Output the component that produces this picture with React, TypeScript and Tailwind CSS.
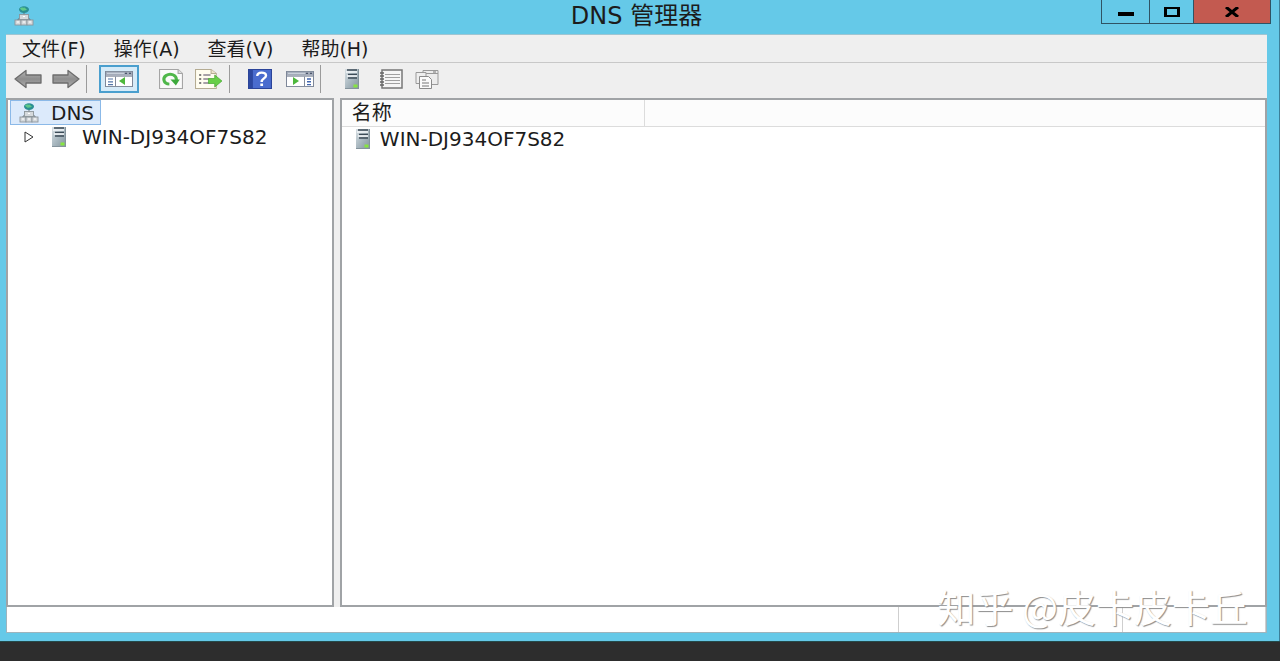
import type { ReactNode } from "react";

function DnsIcon({ className }: { className?: string }) {
  return (
    <svg viewBox="0 0 20 20" className={className} aria-hidden="true">
      <path d="M10 5v6M4 14v-1h12v1" stroke="#6b747b" fill="none" />
      <ellipse cx="10" cy="3.6" rx="5" ry="3.4" fill="#2b8f93" />
      <path d="M6 2.5c2-2 3 0 4-1 2 0 1 2 3 1.500-1 2-3 1-4 2-1-1-2-1-3-2.500z" fill="#5fc98a" />
      <g fill="#d5d9dc" stroke="#8d959b" strokeWidth="0.900">
        <rect x="5.500" y="8.500" width="9" height="5" />
        <rect x="1" y="14" width="6" height="5" />
        <rect x="7" y="14" width="6" height="5" />
        <rect x="13" y="14" width="6" height="5" />
      </g>
      <path d="M9 10.500h2M3 16h2M9 16h2M15 16h2" stroke="#fff" />
    </svg>
  );
}

function ServerIcon({ className }: { className?: string }) {
  return (
    <svg viewBox="0 0 14 20" preserveAspectRatio="none" className={className} aria-hidden="true">
      <defs>
        <linearGradient id="server" x1="0" y1="0" x2="1" y2="1">
          <stop offset="0" stopColor="#d9e0e4" />
          <stop offset="0.500" stopColor="#a9b8c0" />
          <stop offset="1" stopColor="#82929b" />
        </linearGradient>
      </defs>
      <rect width="14" height="20" fill="url(#server)" />
      <path d="M0 19.500h14M13.500 0v20" stroke="#84939c" fill="none" />
      <path d="M2 1h10M3 5.500h9M3 9h9" stroke="#3c4b57" strokeWidth="1.300" />
      <path d="M1 3h11M2 7h10" stroke="#f5f8fa" strokeWidth="1.500" />
      <rect x="8.500" y="15.500" width="4" height="3" fill="#86e63f" />
    </svg>
  );
}

function ArrowIcon({ flip = false }: { flip?: boolean }) {
  return (
    <svg viewBox="0 0 28 20" className={flip ? "h-5 w-7 -scale-x-100" : "h-5 w-7"} aria-hidden="true">
      <defs>
        <linearGradient id="arrow" x1="0" y1="0" x2="0" y2="1">
          <stop offset="0" stopColor="#b5b5b5" />
          <stop offset="0.500" stopColor="#8d8d8d" />
          <stop offset="1" stopColor="#b0b0b0" />
        </linearGradient>
      </defs>
      <path d="M1 10 12 1.500V6h15v8H12v4.500z" fill="url(#arrow)" stroke="#6c6c6c" strokeWidth="1.300" strokeLinejoin="round" />
    </svg>
  );
}

function PaneIcon({ side }: { side: "left" | "right" }) {
  return (
    <svg viewBox="0 0 28 17" className="h-4 w-7" preserveAspectRatio="none" aria-hidden="true">
      <rect x=".5" y=".5" width="27" height="16" fill="#fff" stroke="#7e8798" />
      <path d="M1 1h26v4H1z" fill="#a3abb9" />
      <path d="M2 2.500h17" stroke="#d2d8e2" />
      <path d="M1 5.500h26" stroke="#7e8798" />
      <path d="M20 2.500h2M24 2.500h2" stroke="#4b556b" strokeWidth="1.500" />
      {side === "left" ? (
        <>
          <path d="M10.500 6v10" stroke="#7e8798" />
          <path d="M3 8.500h5M3 11.500h5M3 14.500h5" stroke="#5577a8" strokeWidth="1.300" />
          <path d="M20 6.500v8.500l-6-4.250z" fill="#4db83c" />
        </>
      ) : (
        <>
          <path d="M18.500 6v10" stroke="#7e8798" />
          <path d="M21 8.500h4M21 11.500h4M21 14.500h4" stroke="#4166b0" strokeWidth="1.500" />
          <path d="M7 6.500v8.500l6-4.250z" fill="#4db83c" />
        </>
      )}
    </svg>
  );
}

function RefreshIcon() {
  return (
    <svg viewBox="0 0 22 20" className="h-5 w-6" preserveAspectRatio="none" aria-hidden="true">
      <path d="M.5.500h17l4 4v15H.5z" fill="#fafafa" stroke="#a5a5a5" />
      <path d="M17.500.500v4h4" fill="#ddd" stroke="#a5a5a5" />
      <path d="M9.500 15.200C4 15 3 9 6.500 6.500c4-2.800 9.500-.5 9.500 4.500" fill="none" stroke="#4fb74a" strokeWidth="2.800" />
      <path d="M10.500 10.500H19L15.500 16.500z" fill="#3da93c" />
    </svg>
  );
}

function ExportIcon() {
  return (
    <svg viewBox="0 0 27 20" className="h-5 w-7" preserveAspectRatio="none" aria-hidden="true">
      <path d="M.5.500h15l5 4v15H.5z" fill="#fffdf0" stroke="#b5ac93" />
      <path d="M15.500.500v4h5" fill="#eee5cf" stroke="#b5ac93" />
      <path d="M4 6h2M4 10h2M4 14h2" stroke="#555" strokeWidth="1.500" />
      <path d="M8 6h7M8 10h6M8 14h6" stroke="#8c8290" strokeWidth="1.500" />
      <path d="M13 9.500h6V6l7 6-7 6v-3.500h-6z" fill="#68cf48" stroke="#45a631" strokeWidth=".7" />
    </svg>
  );
}

function HelpIcon() {
  return (
    <svg viewBox="0 0 22 20" className="h-5 w-6" preserveAspectRatio="none" aria-hidden="true">
      <rect x=".5" y=".5" width="21" height="19" fill="#4a6cce" stroke="#2b4499" />
      <path d="M1 1h3.500v18H1z" fill="#2c479f" />
      <path d="M8.500 7c0-4.500 8-4.500 8-.5 0 3-4 3-4 6.500" fill="none" stroke="#fff" strokeWidth="2.200" />
      <rect x="11.300" y="14.500" width="2.500" height="2.500" fill="#fff" />
    </svg>
  );
}

function NotebookIcon() {
  return (
    <svg viewBox="0 0 24 20" className="h-5 w-6" aria-hidden="true">
      <rect x="3" y="1" width="20" height="18" fill="#f5f5f5" stroke="#777" strokeWidth="1.500" />
      <path d="M6 5.500h15M6 8.500h15M6 11.500h15M6 14.500h15" stroke="#a0a0a0" />
      <path d="M1 4h4M1 7h4M1 10h4M1 13h4M1 16h4" stroke="#666" strokeWidth="1.300" />
    </svg>
  );
}

function PropertiesIcon() {
  return (
    <svg viewBox="0 0 24 20" className="h-5 w-6" aria-hidden="true">
      <path d="M8 1.500h15v14H8zM8 4.500h15" fill="#ececec" stroke="#999" />
      <path d="M1 3.500h10v11H1z" fill="#eee" stroke="#999" />
      <path d="M4.500 7.500h9l3 3v9h-12z" fill="#fafafa" stroke="#8a8a8a" />
      <path d="M7 11h4M7 14h7M7 17h7" stroke="#777" />
      <path d="M18 3h3" stroke="#777" />
    </svg>
  );
}

function ToolButton({ label, children }: { label: string; children: ReactNode }) {
  return (
    <button type="button" aria-label={label} className="flex h-7 items-center justify-center">
      {children}
    </button>
  );
}

function Divider() {
  return <span className="h-7 w-px bg-[#9b9b9b]" />;
}

const menus = ["文件(F)", "操作(A)", "查看(V)", "帮助(H)"];

export default function App() {
  return (
    <div className="relative flex min-h-screen flex-col bg-[#2d2d2d] font-['DejaVu_Sans','Noto_Sans_CJK_SC',sans-serif] text-xl text-[#1c1c1c]">
      <div className="flex flex-1 flex-col border-r border-[#3c7f99] bg-[#65c9e8] pr-3 pb-2 pl-1.5">
        <header className="grid h-[34px] grid-cols-[1fr_auto_1fr] items-start">
          <DnsIcon className="mt-1.5 ml-2 h-5 w-5" />
          <h1 className="text-2xl leading-8">DNS 管理器</h1>
          <div className="-mr-1 flex h-6 justify-self-end border border-t-0 border-[#2f5364]">
            <button type="button" aria-label="最小化" className="flex w-12 items-center justify-center border-r border-[#2f5364]">
              <span className="mt-1 h-1 w-4 bg-black" />
            </button>
            <button type="button" aria-label="最大化" className="flex w-11 items-center justify-center border-r border-[#2f5364]">
              <span className="h-2.5 w-4 border-x-3 border-y-2 border-black" />
            </button>
            <button type="button" aria-label="关闭" className="flex w-19 items-center justify-center bg-[#c35a50]">
              <svg viewBox="0 0 16 10" className="h-2.5 w-4" aria-hidden="true">
                <path d="M2 0l12 10M14 0 2 10" stroke="#000" strokeWidth="3" />
              </svg>
            </button>
          </div>
        </header>

        <main className="flex flex-1 flex-col border-t border-[#9fc5d2] bg-[#efefef]">
          <nav className="flex h-[28px] items-center gap-7 border-b border-[#c8c8c8] pl-4 text-[19px]">
            {menus.map((menu) => (
              <button type="button" key={menu} className="leading-6">
                {menu}
              </button>
            ))}
          </nav>

          <div className="flex h-[35px] items-center pb-1 pl-2">
            <div className="flex items-center gap-2.5">
              <ToolButton label="后退"><ArrowIcon /></ToolButton>
              <ToolButton label="前进"><ArrowIcon flip /></ToolButton>
            </div>
            <div className="ml-1.5 flex items-center gap-3">
              <Divider />
              <button
                type="button"
                aria-label="显示/隐藏控制台树"
                aria-pressed="true"
                className="flex h-7 w-10 items-center justify-center border-2 border-[#4a9fce] bg-[#d6ebf8]"
              >
                <PaneIcon side="left" />
              </button>
            </div>
            <div className="ml-5 flex items-center gap-3">
              <ToolButton label="刷新"><RefreshIcon /></ToolButton>
              <ToolButton label="导出列表"><ExportIcon /></ToolButton>
            </div>
            <div className="ml-1.5 flex items-center gap-4.5">
              <Divider />
              <ToolButton label="帮助"><HelpIcon /></ToolButton>
            </div>
            <div className="ml-3.5 flex items-center gap-1.5">
              <ToolButton label="显示/隐藏操作窗格"><PaneIcon side="right" /></ToolButton>
              <Divider />
            </div>
            <div className="ml-6 flex items-center gap-3">
              <ToolButton label="新建服务器"><ServerIcon className="mr-2 h-5 w-3.5" /></ToolButton>
              <ToolButton label="列表"><NotebookIcon /></ToolButton>
              <ToolButton label="属性"><PropertiesIcon /></ToolButton>
            </div>
          </div>

          <div className="grid flex-1 grid-cols-[26%_1fr] gap-1.5">
            <aside className="border-2 border-[#a0a3a6] bg-white pl-0.5">
              <button type="button" className="flex h-[25px] items-center gap-3 border border-[#8bb9e8] bg-[#dceafb] pr-1.5 pl-2 leading-6">
                <DnsIcon className="h-5 w-5" />
                DNS
              </button>
              <button type="button" className="flex h-6 items-center pl-3.5 leading-6">
                <svg viewBox="0 0 10 12" className="h-3 w-2.5" aria-hidden="true">
                  <path d="M1 1v10l8-5z" fill="#fff" stroke="#333" />
                </svg>
                <ServerIcon className="mr-4 ml-4.5 h-5 w-3.5" />
                WIN-DJ934OF7S82
              </button>
            </aside>

            <section className="border-2 border-[#a0a3a6] bg-white">
              <table className="w-full table-fixed border-collapse text-left">
                <thead>
                  <tr className="h-[26px] border-b border-[#dcdcdc] bg-[#fcfcfc]">
                    <th scope="col" className="w-[303px] border-r border-[#dcdcdc] p-0 pl-2.5 leading-6 font-normal">名称</th>
                    <td />
                  </tr>
                </thead>
                <tbody>
                  <tr>
                    <td colSpan={2} className="p-0">
                      <span className="flex h-6 items-center gap-2.5 pl-3.5 leading-6">
                        <ServerIcon className="h-5 w-3.5" />
                        WIN-DJ934OF7S82
                      </span>
                    </td>
                  </tr>
                </tbody>
              </table>
            </section>
          </div>

          <footer className="flex h-[26px] justify-end border-x border-b border-[#9eb4bd] bg-white">
            <span className="w-56 border-l border-[#cfcfcf]" />
            <span className="w-36 border-x border-[#cfcfcf]" />
          </footer>
        </main>
      </div>
      <div className="h-5 border-t border-[#244a4a]" />

      <p className="absolute right-8 bottom-7 font-['Noto_Sans_CJK_SC',sans-serif] text-[38px] leading-[54px] text-white [text-shadow:1px_1px_1px_#8c8c8c]">
        知乎 @皮卡皮卡丘
      </p>
    </div>
  );
}
